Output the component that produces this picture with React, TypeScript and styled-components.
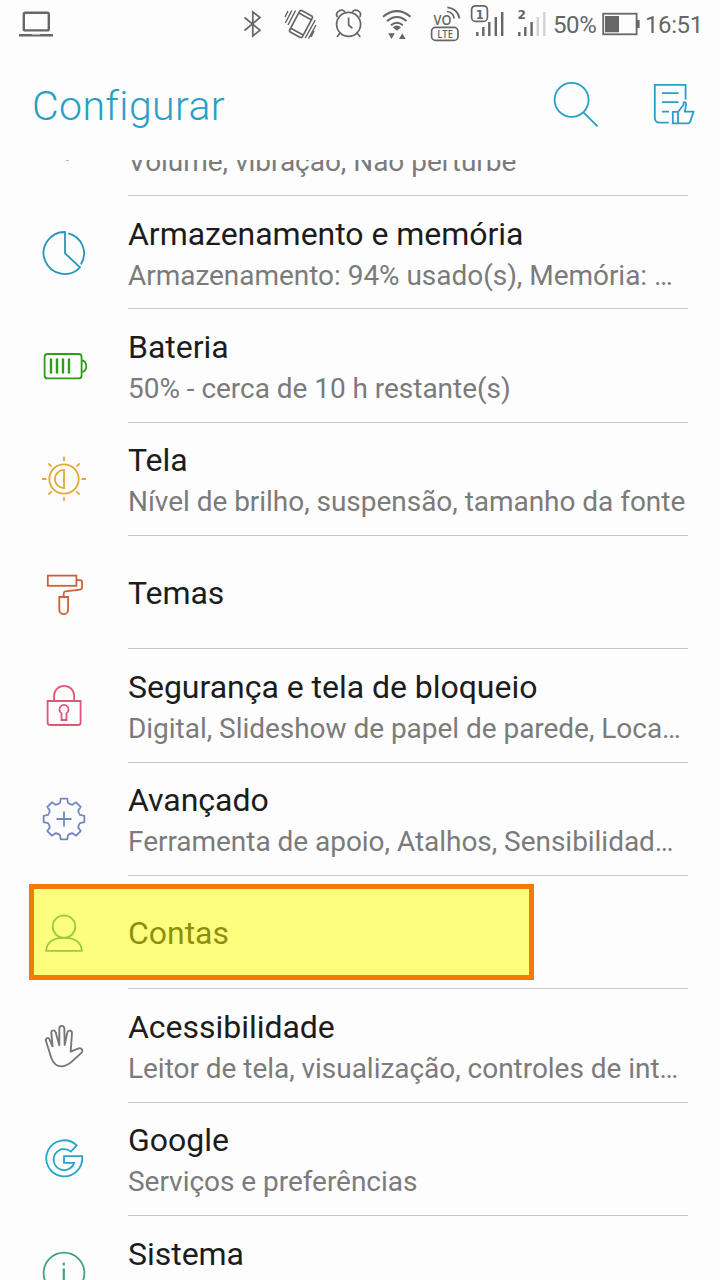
import React from "react";
import styled, { createGlobalStyle } from "styled-components";

const GlobalStyle = createGlobalStyle`
  *, *::before, *::after { box-sizing: border-box; }
  body { margin: 0; background: #fdfdfd; }
  svg { display: block; flex: none; fill: none; }
`;

const Screen = styled.div`
  display: flex;
  flex-direction: column;
  width: 720px;
  height: 1280px;
  overflow: hidden;
  background: #fdfdfd;
  font-family: Roboto, "Liberation Sans", sans-serif;
`;

const StatusBar = styled.div`
  display: flex;
  align-items: center;
  justify-content: space-between;
  height: 50px;
  padding: 0 17px 0 18px;
  color: #666;
`;

const StatusGroup = styled.div`
  display: flex;
  align-items: center;
`;

const StatusText = styled.span<{ $width: number }>`
  width: ${(p) => p.$width}px;
  font-size: 24px;
  line-height: 50px;
  letter-spacing: -0.4px;
  white-space: nowrap;
`;

const Header = styled.header`
  display: flex;
  align-items: center;
  flex: none;
  height: 110px;
  padding: 0 24px 0 32px;
  color: #2a9fc4;
`;

const Title = styled.h1`
  flex: 1;
  margin: 0;
  padding-top: 1px;
  font-size: 41px;
  font-weight: 300;
  line-height: 60px;
  letter-spacing: 0.4px;
`;

const HeaderActions = styled.div`
  display: flex;
  gap: 52px;
`;

const List = styled.main`
  flex: 1;
  min-height: 0;
  overflow: hidden;
`;

const ListInner = styled.div`
  margin-top: -77.33px;
`;

const Row = styled.div`
  position: relative;
  display: flex;
  height: 113.333px;
  padding: 0 32px 0 34px;
`;

const IconSlot = styled.div<{ $color: string }>`
  display: flex;
  align-items: center;
  width: 94px;
  height: 113.333px;
  color: ${(p) => p.$color};
`;

const RowText = styled.div<{ $single: boolean }>`
  display: flex;
  flex: 1;
  flex-direction: column;
  justify-content: center;
  min-width: 0;
  padding-top: ${(p) => (p.$single ? 1 : 4)}px;
  border-bottom: 1px solid #c6c6c8;
  white-space: nowrap;
`;

const RowTitle = styled.div`
  min-height: 42px;
  font-size: 32px;
  line-height: 42px;
  letter-spacing: -0.03px;
  color: #1c1c1c;
`;

const RowSubtitle = styled.div`
  height: 41px;
  font-size: 28px;
  line-height: 41px;
  letter-spacing: -0.035px;
  color: #7b7b7b;
`;

const Highlight = styled.div`
  position: absolute;
  top: 8.5px;
  left: 29px;
  width: 505px;
  height: 96px;
  border: 5px solid #f57a05;
  background: rgba(255, 255, 0, 0.5);
`;

const RowIcon = ({ children }: { children: React.ReactNode }) => (
  <svg width="60" height="60" viewBox="-30 -30 60 60" stroke="currentColor" strokeWidth="1.8">
    {children}
  </svg>
);

const gearPath = (() => {
  const points: string[] = [];
  const at = (r: number, deg: number) => {
    const a = (deg * Math.PI) / 180;
    return `${(r * Math.sin(a)).toFixed(2)} ${(-r * Math.cos(a)).toFixed(2)}`;
  };
  for (let i = 0; i < 8; i++) {
    const c = i * 45;
    points.push(`${at(16.6, c - 14)} L${at(20.6, c - 9)} L${at(20.6, c + 9)} L${at(16.6, c + 14)}`);
    points.push(`Q${at(15.6, c + 22.5)} ${at(16.6, c + 31)}`);
  }
  return "M" + points.map((p, i) => (i > 0 && !p.startsWith("Q") ? "L" + p : p)).join(" ") + "Z";
})();

const icons = {
  sound: <path d="M2.4 20.8h2" strokeWidth="2" />,
  storage: (
    <>
      <path d="M1 -21A21 21 0 1 0 16 14.3L1 .3Z" strokeLinejoin="round" />
      <path d="M4.3 -19.6A20.6 20.6 0 0 1 16.8 11.5" />
    </>
  ),
  battery: (
    <>
      <rect x="-19.4" y="-12" width="37" height="24.4" rx="3" />
      <path d="M17.6 -5.6C23.8 -5 23.8 5.4 17.6 6" />
      <path d="M-13 -7.5V7.6M-7 -7.5V7.6M-1 -7.5V7.6M5 -7.5V7.6" strokeWidth="2.4" />
    </>
  ),
  display: (
    <>
      <circle cx="0" cy="0" r="14.7" />
      <path d="M0 -9.1V9.1A9.1 9.1 0 0 1 0 -9.1Z" />
      <path d="M0 -22.2V-18M0 18V22M-22 0H-17.5M17.5 0H22M-15.6 -15.5L-12.4 -12.4M15.6 -15.5L12.4 -12.4M-15.6 15.5L-12.4 12.4M15.6 15.5L12.4 12.4" />
    </>
  ),
  themes: (
    <>
      <rect x="-16.2" y="-17.4" width="28.6" height="10.2" />
      <path d="M12.4 -12.8H16.2Q18 -12.8 18 -11V-5.4Q18 -3.6 16.2 -3.4L1.4 -1.6Q-.3 -1.3 -.3 .4V4" />
      <path d="M-4.7 4H4.1V16.8A4.4 4.4 0 0 1 -4.7 16.8Z" />
    </>
  ),
  security: (
    <>
      <path d="M-16.4 -5H16.6V16.4Q16.6 19 14 19H-13.8Q-16.4 19 -16.4 16.4Z" />
      <path d="M-9.9 -5V-10.2A10 10 0 0 1 10.1 -10.2V-5" />
      <path d="M-2.5 7.2A4.5 4.5 0 1 1 2.5 7.2V14H-2.5Z" />
    </>
  ),
  advanced: (
    <>
      <path d={gearPath} strokeLinejoin="round" />
      <path d="M-7.5 0H7.5M0 -7.5V7.5" />
    </>
  ),
  accounts: (
    <>
      <circle cx="0" cy="-6.4" r="11.3" />
      <path d="M-17.8 17.8Q-17 4.8 0 4.8T17.8 17.8Z" />
    </>
  ),
  accessibility: (
    <g transform="scale(.3333)">
      <path
        d="M-34 3L-44 -21C-47 -27 -57 -23 -54 -15L-38 36C-32 53 -23 61 -7 61C8 61 20 51 30 41L53 20C59 14 53 5 44 7L20 17L24 -39C24 -48 12 -49 10 -40L2 -3L1 -53C0 -63 -14 -63 -14 -53L-14 -2L-25 -41C-27 -50 -40 -48 -38 -39L-34 3"
        strokeWidth="5.6"
        strokeLinejoin="round"
      />
    </g>
  ),
  google: (
    <path d="M12.7 -13.7A18 18 0 1 0 18.1 -2.9H0V3.9H10.1A10.5 10.5 0 1 1 6.9 -7.5Z" />
  ),
  system: (
    <>
      <circle cx="0" cy="0" r="20.4" />
      <path d="M-.2 -10.2V-7.6M-.2 -4.6V9" strokeWidth="2.2" />
    </>
  ),
};

type Item = {
  icon: keyof typeof icons;
  color: string;
  title?: string;
  subtitle?: string;
  highlighted?: boolean;
};

const items: Item[] = [
  { icon: "sound", color: "#2a9fc4", subtitle: "Volume, vibração, Não perturbe" },
  { icon: "storage", color: "#2795ba", title: "Armazenamento e memória", subtitle: "Armazenamento: 94% usado(s), Memória: …" },
  { icon: "battery", color: "#2f9e16", title: "Bateria", subtitle: "50% - cerca de 10 h restante(s)" },
  { icon: "display", color: "#e3a937", title: "Tela", subtitle: "Nível de brilho, suspensão, tamanho da fonte" },
  { icon: "themes", color: "#cf6132", title: "Temas" },
  { icon: "security", color: "#db5878", title: "Segurança e tela de bloqueio", subtitle: "Digital, Slideshow de papel de parede, Loca…" },
  { icon: "advanced", color: "#7186c4", title: "Avançado", subtitle: "Ferramenta de apoio, Atalhos, Sensibilidad…" },
  { icon: "accounts", color: "#2f9a70", title: "Contas", highlighted: true },
  { icon: "accessibility", color: "#777", title: "Acessibilidade", subtitle: "Leitor de tela, visualização, controles de int…" },
  { icon: "google", color: "#25a5cc", title: "Google", subtitle: "Serviços e preferências" },
  { icon: "system", color: "#41a37c", title: "Sistema", subtitle: "" },
];

const LaptopIcon = () => (
  <svg width="36" height="50" viewBox="18 0 36 50" stroke="currentColor">
    <rect x="23.8" y="12.8" width="25" height="17.6" rx="1.5" strokeWidth="2.4" />
    <path d="M19 35.2H53" strokeWidth="2.6" />
    <path d="M32 34.2H40" stroke="#ddd" strokeWidth="1" />
  </svg>
);

const StatusIcons = () => (
  <svg width="313" height="50" viewBox="240 0 313 50" stroke="currentColor" strokeWidth="1.7">
    <path d="M244.5 17.5L260 30.2L252.8 36V12L260 17.5L244.5 30.5" />
    <g transform="rotate(28 301 24)">
      <rect x="293.8" y="11.8" width="14.4" height="24.4" rx="2" />
      <path d="M294 15.4H308M294 32.6H308" />
    </g>
    <path d="M291.8 10.5L285.3 23M295.6 10.5L288 25M288 11L285 17M316 25L308.5 38.5M315.3 20L305.2 38M314 31L311 37" strokeWidth="1.5" />
    <circle cx="348.6" cy="24.3" r="12" />
    <path d="M348.6 17.5V25L352.4 28.4M340 33L337 37M357 33L360.3 37" />
    <path d="M337.4 17C334.3 12 341.5 8 345 11.8M359.8 17C363 12 355.8 8 352.3 11.8" />
    <g strokeWidth="2">
      <path d="M383 16.8Q397 5.5 410.5 16.8M387 21.1Q397 13 406.6 21.1M391 25.2Q397 20.4 402.8 25.2" />
    </g>
    <path d="M392.8 27.2Q397 23.6 401 27.2L397 30.8ZM388.2 33.2H394.8L391.5 39ZM399 39H405.6L402.3 33.2Z" fill="currentColor" stroke="none" />
    <text x="433.6" y="25" fontFamily="Open Sans, sans-serif" fontSize="14" fontWeight="600" textLength="18" lengthAdjust="spacingAndGlyphs" fill="currentColor" stroke="none">VO</text>
    <path d="M447 11.5Q453 12 454.2 18.5M447.4 7.4Q457.5 8.4 459.5 18.5" />
    <rect x="431.6" y="27.4" width="26.4" height="13" rx="4" />
    <text x="437.2" y="38" fontFamily="Open Sans, sans-serif" fontSize="10.5" fontWeight="600" textLength="15.8" lengthAdjust="spacingAndGlyphs" fill="currentColor" stroke="none">LTE</text>
    <rect x="471.6" y="5.8" width="15.8" height="15.6" rx="4" />
    <text x="475.8" y="18.6" fontFamily="DejaVu Sans, sans-serif" fontSize="13" fontWeight="700" textLength="8" lengthAdjust="spacingAndGlyphs" fill="currentColor" stroke="none">1</text>
    <path d="M477.3 32V36M483.3 27V36M489.3 22V36M495.8 17V36M502.2 12V36" strokeWidth="2.4" />
    <text x="517.6" y="18.8" fontFamily="DejaVu Sans, sans-serif" fontSize="13" fontWeight="700" textLength="8.4" lengthAdjust="spacingAndGlyphs" fill="currentColor" stroke="none">2</text>
    <path d="M519.3 32V36M525.3 27V36M531.6 22V36" strokeWidth="2.4" />
    <path d="M537.8 17V36M544.3 12V36" stroke="#d2d2d2" strokeWidth="2.4" />
  </svg>
);

const BatteryStatusIcon = () => (
  <svg width="43" height="50" viewBox="602 0 43 50" stroke="currentColor">
    <rect x="603.2" y="13.7" width="33.4" height="20.6" strokeWidth="1.8" />
    <path d="M605 16H619V32.3H605ZM637 20H639.6V28H637Z" fill="currentColor" stroke="none" />
  </svg>
);

const SearchIcon = () => (
  <svg width="48" height="50" viewBox="552 79 48 50" stroke="currentColor" strokeWidth="1.8">
    <circle cx="571.6" cy="98.8" r="17" />
    <path d="M583.4 111.4L597.6 125.4" />
  </svg>
);

const TipsIcon = () => (
  <svg width="44" height="50" viewBox="652 80 44 50" stroke="currentColor" strokeWidth="1.8">
    <path d="M668.8 122.6H660Q654.8 122.6 654.8 117.4V84.8H685.6V99.5" />
    <path d="M662 93.2H678.6M662 102.2H678.6M662 111.6H669" />
    <path d="M672.8 111.8H678V123.4H672.8ZM678 112L683.6 104.8V102.6C684 101.6 686.6 102 686 105L684.8 111.6H693.6L690.2 121.6Q689.6 123.4 688 123.4H678" strokeLinejoin="round" />
  </svg>
);

const SettingsRow = ({ item }: { item: Item }) => (
  <Row>
    <IconSlot $color={item.color}>
      <RowIcon>{icons[item.icon]}</RowIcon>
    </IconSlot>
    <RowText $single={item.subtitle === undefined}>
      <RowTitle>{item.title}</RowTitle>
      {item.subtitle !== undefined && <RowSubtitle>{item.subtitle}</RowSubtitle>}
    </RowText>
    {item.highlighted && <Highlight />}
  </Row>
);

export default function App() {
  return (
    <Screen>
      <GlobalStyle />
      <StatusBar>
        <LaptopIcon />
        <StatusGroup>
          <StatusIcons />
          <StatusText $width={49}>50%</StatusText>
          <BatteryStatusIcon />
          <StatusText $width={58}>16:51</StatusText>
        </StatusGroup>
      </StatusBar>
      <Header>
        <Title>Configurar</Title>
        <HeaderActions>
          <SearchIcon />
          <TipsIcon />
        </HeaderActions>
      </Header>
      <List>
        <ListInner>
          {items.map((item) => (
            <SettingsRow key={item.icon} item={item} />
          ))}
        </ListInner>
      </List>
    </Screen>
  );
}
